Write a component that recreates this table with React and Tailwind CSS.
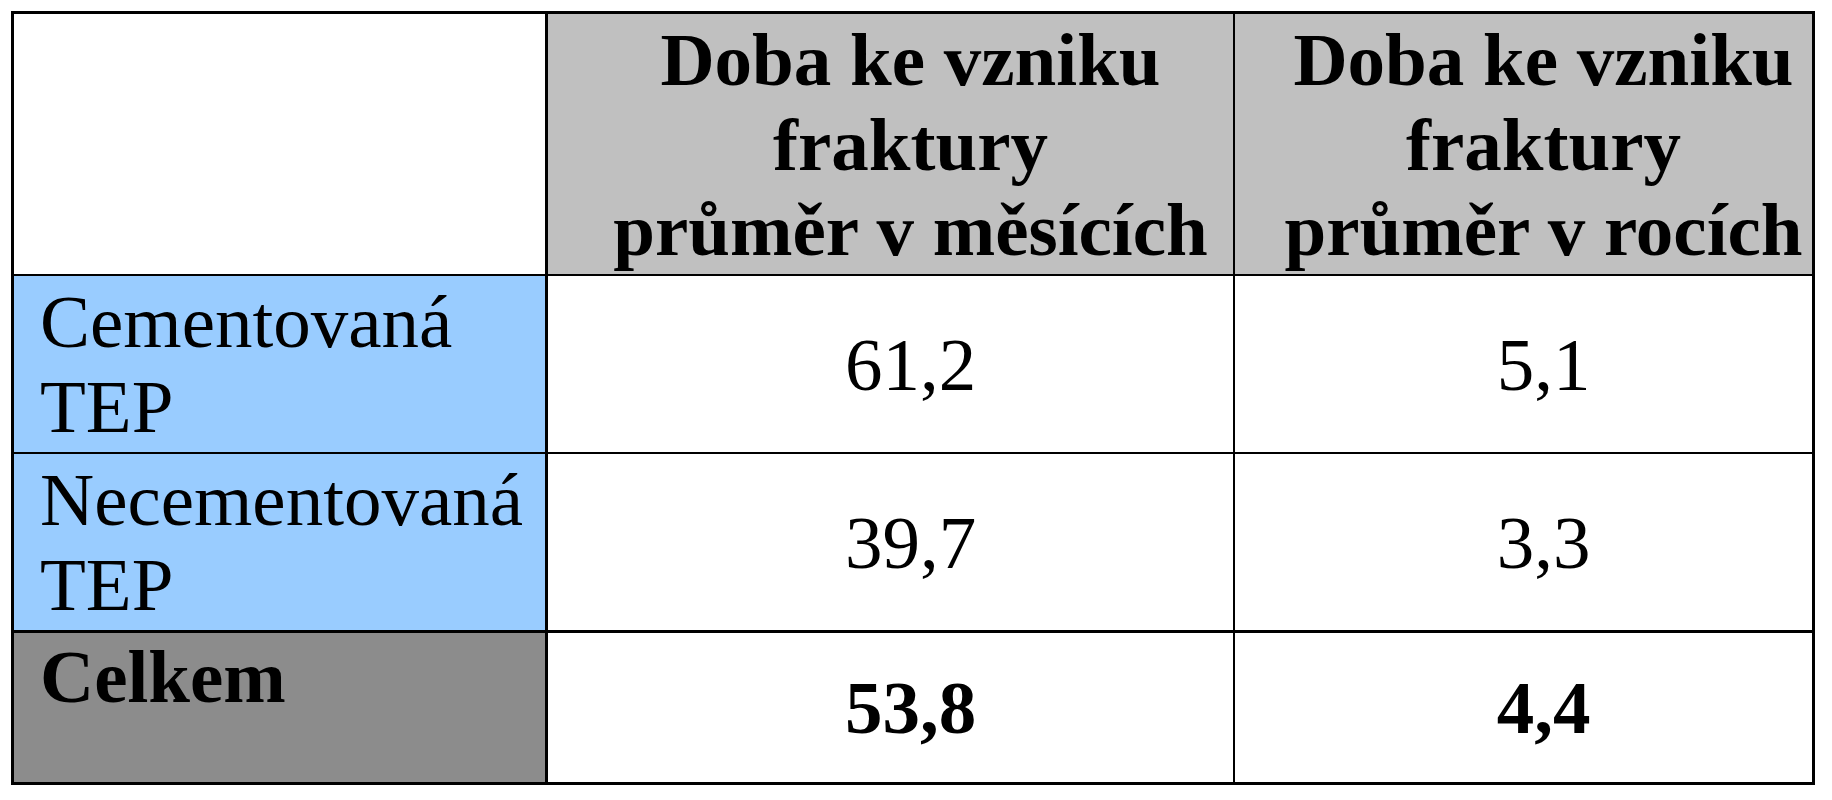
const rows = [
  { label: ['Cementovaná', 'TEP'], months: '61,2', years: '5,1' },
  { label: ['Necementovaná', 'TEP'], months: '39,7', years: '3,3' },
];

function HeaderCell({ unit, last }) {
  return (
    <div
      className={`flex items-center justify-center bg-[#c0c0c0] pl-10 text-center font-bold border-b-2 border-black ${
        last ? '' : 'border-r-2'
      }`}
    >
      <span>
        Doba ke vzniku
        <br />
        fraktury
        <br />
        průměr v {unit}
      </span>
    </div>
  );
}

function ValueCell({ value, bold, border, last }) {
  return (
    <div
      className={`flex items-center justify-center pl-10 border-black ${border} ${last ? '' : 'border-r-2'} ${
        bold ? 'font-bold' : ''
      }`}
    >
      {value}
    </div>
  );
}

export default function App() {
  return (
    <div className="min-h-screen bg-white pl-[11px] pt-[11px]">
      <div className="grid h-[774px] w-[1804px] grid-cols-[534px_687px_577px] grid-rows-[262px_178px_179px_149px] border-[3px] border-black font-['Liberation_Serif','Times_New_Roman',serif] text-[75px] leading-[85px] text-black">
        <div className="border-b-2 border-r-[3px] border-black bg-white" />
        <HeaderCell unit="měsících" />
        <HeaderCell unit="rocích" last />

        {rows.map((row, i) => {
          const border = i === 0 ? 'border-b-2' : 'border-b-[3px]';
          return [
            <div key={`l${i}`} className={`bg-[#99ccff] pl-[26px] pt-[3px] border-r-[3px] border-black ${border}`}>
              {row.label[0]}
              <br />
              {row.label[1]}
            </div>,
            <ValueCell key={`m${i}`} value={row.months} border={border} />,
            <ValueCell key={`y${i}`} value={row.years} border={border} last />,
          ];
        })}

        <div className="bg-[#8c8c8c] pl-[26px] pt-[1px] font-bold border-r-[3px] border-black">Celkem</div>
        <ValueCell value="53,8" bold border="" />
        <ValueCell value="4,4" bold border="" last />
      </div>
    </div>
  );
}
